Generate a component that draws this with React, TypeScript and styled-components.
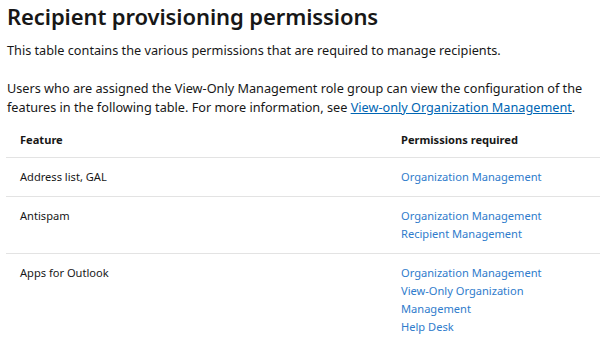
import React from 'react'
import styled, { createGlobalStyle } from 'styled-components'

const Global = createGlobalStyle`
  body {
    margin: 0;
    background: #fff;
    font-family: 'Noto Sans', 'Open Sans', sans-serif;
    color: #171717;
  }
`

const rows = [
  { feature: 'Address list, GAL', perms: ['Organization Management'] },
  { feature: 'Antispam', perms: ['Organization Management', 'Recipient Management'] },
  {
    feature: 'Apps for Outlook',
    perms: ['Organization Management', 'View-Only Organization Management', 'Help Desk'],
  },
]

function App() {
  return (
    <Main>
      <Global />
      <Title>Recipient provisioning permissions</Title>
      <Para>This table contains the various permissions that are required to manage recipients.</Para>
      <Para>
        Users who are assigned the View-Only Management role group can view the configuration of the
        features in the following table. For more information, see{' '}
        <InlineLink href="#">View-only Organization Management</InlineLink>.
      </Para>
      <Table>
        <thead>
          <tr>
            <Th>Feature</Th>
            <Th>Permissions required</Th>
          </tr>
        </thead>
        <tbody>
          {rows.map((r) => (
            <tr key={r.feature}>
              <Td>{r.feature}</Td>
              <Td>
                {r.perms.map((p) => (
                  <PermLink key={p} href="#">
                    {p}
                  </PermLink>
                ))}
              </Td>
            </tr>
          ))}
        </tbody>
      </Table>
    </Main>
  )
}

export default App

const Main = styled.main`
  padding: 0 0 0 7px;
  width: 593px;
`

const Title = styled.h1`
  margin: 0;
  padding-top: 1px;
  font-size: 22px;
  font-weight: 600;
  line-height: 30px;
  letter-spacing: -0.1px;
`

const Para = styled.p`
  margin: 19px 0 0;
  font-size: 12.7px;
  line-height: 19px;
  &:first-of-type {
    margin-top: 10px;
  }
`

const InlineLink = styled.a`
  color: #0065b3;
  text-decoration: underline;
`

const Table = styled.table`
  margin-top: 4px;
  margin-left: -1px;
  width: 594px;
  border-collapse: collapse;
  table-layout: fixed;
  font-size: 11.1px;
  line-height: 18px;
`

const Th = styled.th`
  text-align: left;
  font-weight: 700;
  padding: 10px 14px 8px 14px;
  border-bottom: 1px solid #e3e3e3;
  &:first-child {
    width: 353px;
  }
`

const Td = styled.td`
  vertical-align: top;
  padding: 10px 14px 10px 14px;
  border-bottom: 1px solid #e3e3e3;
`

const PermLink = styled.a`
  display: block;
  color: #2f7ccc;
  text-decoration: none;
`
